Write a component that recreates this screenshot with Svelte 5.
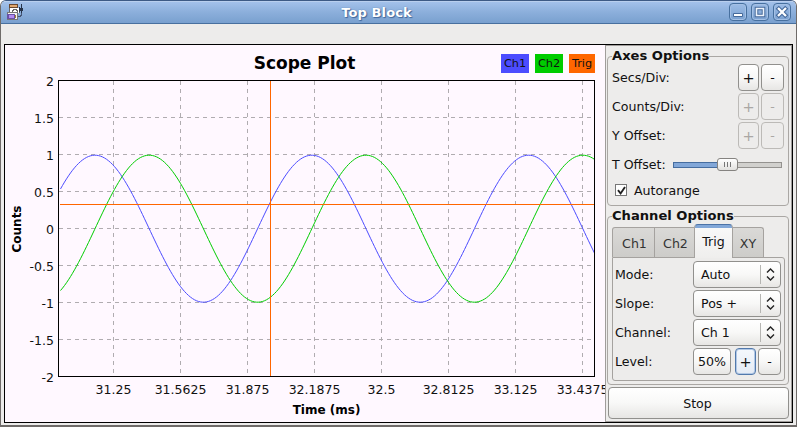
<script>
  const left = 59;
  const right = 594;
  const centerY = 228.7;
  const period = 216.8;

  const xTicks = ["31.25", "31.5625", "31.875", "32.1875", "32.5", "32.8125", "33.125", "33.4375"].map(
    (label, i) => ({ label, x: 113.5 + i * 67 })
  );
  const yTicks = ["2", "1.5", "1", "0.5", "0", "-0.5", "-1", "-1.5", "-2"].map((label, i) => ({
    label,
    y: 80.5 + i * 37,
  }));

  function wave(peakX) {
    const points = [];
    for (let x = left + 1.5; x <= right + 0.5; x += 2) {
      const y = centerY - 73.5 * Math.cos(((x - peakX) * 2 * Math.PI) / period);
      points.push(`${x},${y.toFixed(2)}`);
    }
    return points.join(" ");
  }

  const legend = [
    { label: "Ch1", x: 501, width: 28, color: "#4c4cff" },
    { label: "Ch2", x: 535, width: 28, color: "#00cc00" },
    { label: "Trig", x: 569, width: 26, color: "#ff6600" },
  ];

  const tabs = ["Ch1", "Ch2", "Trig", "XY"];
  let activeTab = $state("Trig");
  let autorange = $state(true);
  let tOffset = $state(50);

  const steppers = [
    { label: "Secs/Div:", disabled: false },
    { label: "Counts/Div:", disabled: true },
    { label: "Y Offset:", disabled: true },
  ];
  const choices = [
    { label: "Mode:", value: "Auto" },
    { label: "Slope:", value: "Pos +" },
    { label: "Channel:", value: "Ch 1" },
  ];
</script>

<div class="window">
  <header class="titlebar">
    <svg class="app-icon" width="17" height="17" viewBox="0 0 17 17" shape-rendering="crispEdges">
      <path d="M2 0h9v4H2z" fill="#6b4930" />
      <path d="M3 1h7v2H3z" fill="#e0a870" />
      <path d="M2 4h10v5H2z" fill="#fff" />
      <path d="M2 4v5M12 4v5" stroke="#666" />
      <path d="M5 8V6h1V5h3v1h1v2" fill="none" stroke="#666" />
      <path d="M12 3h1v5h-1zM14 0h1v9h-1zM13 4h3v3h-3z" fill="#263349" />
      <path d="M14.5 9v2h-1v1h-3" fill="none" stroke="#465675" />
      <path d="M0 8h11v8H0z" fill="#777" />
      <path d="M1 9h9v6H1z" fill="#f4f4f4" />
      <path d="M0 10h8v5H0z" fill="#6952a5" />
      <path d="M2 11h5v3H2z" fill="#b28af0" />
      <path d="M8 11h1v3H8z" fill="#9c7a2e" />
    </svg>
    <span class="title">Top Block</span>
    <div class="controls">
      <button type="button" aria-label="Minimize"><svg width="16" height="16" viewBox="0 0 16 16"><path d="M3.5 9.5h9v3h-9z" fill="#fff" stroke="#45699b" /></svg></button>
      <button type="button" aria-label="Maximize"><svg width="16" height="16" viewBox="0 0 16 16"><path d="M4.5 4.5h7v7h-7z" fill="none" stroke="#45699b" stroke-width="3.6" /><path d="M4.5 4.5h7v7h-7z" fill="none" stroke="#edf3fb" stroke-width="1.6" /></svg></button>
      <button type="button" aria-label="Close"><svg width="16" height="16" viewBox="0 0 16 16"><path d="M4.8 4.8l6.4 6.4m0-6.4l-6.4 6.4" stroke="#45699b" stroke-width="4.4" stroke-linecap="square" /><path d="M4.8 4.8l6.4 6.4m0-6.4l-6.4 6.4" stroke="#fff" stroke-width="2.3" stroke-linecap="square" /></svg></button>
    </div>
  </header>
  <div class="toolbar"></div>

  <main class="content">
    <svg class="plot" width="600" height="377" viewBox="5 45 600 377">
      <text class="plot-title" x="304.5" y="69" text-anchor="middle">Scope Plot</text>
      {#each legend as item}
        <rect x={item.x} y="54" width={item.width} height="19" fill={item.color} />
        <text class="key" x={item.x + item.width / 2} y="67" text-anchor="middle">{item.label}</text>
      {/each}

      <g class="grid">
        {#each xTicks as tick}
          <line x1={tick.x} x2={tick.x} y1="81" y2="376" />
        {/each}
        {#each yTicks.slice(1, -1) as tick}
          <line x1="59" x2="594" y1={tick.y} y2={tick.y} />
        {/each}
      </g>

      <polyline points={wave(95)} fill="none" stroke="#4c4cff" />
      <polyline points={wave(149.2)} fill="none" stroke="#00cc00" />
      <path d="M60 204.5H594M270.5 81V376" stroke="#ff6600" />
      <rect x="58.5" y="80.5" width="536" height="296" fill="none" stroke="#000" />

      {#each yTicks as tick}
        <text class="tick" x="54" y={tick.y + 5} text-anchor="end">{tick.label}</text>
      {/each}
      {#each xTicks as tick}
        <text class="tick" x={tick.x} y="394" text-anchor="middle">{tick.label}</text>
      {/each}
      <text class="axis" x="326.5" y="414" text-anchor="middle">Time (ms)</text>
      <text class="axis" transform="translate(21 229) rotate(-90)" text-anchor="middle">Counts</text>
    </svg>

    <aside class="panel">
      <fieldset class="axes">
        <legend>Axes Options</legend>
        {#each steppers as row}
          <div class="row">
            <span>{row.label}</span>
            <div class="pair">
              <button type="button" class="btn plus" disabled={row.disabled}>+</button>
              <button type="button" class="btn minus" disabled={row.disabled}>-</button>
            </div>
          </div>
        {/each}
        <div class="row">
          <span>T Offset:</span>
          <input class="slider" type="range" min="0" max="100" bind:value={tOffset} />
        </div>
        <label class="check">
          <input type="checkbox" bind:checked={autorange} />
          <span class="box">
            {#if autorange}
              <svg width="11" height="11" viewBox="0 0 11 11"><path d="M2 5.2l2.6 3.3L9 2" fill="none" stroke="#222" stroke-width="1.9" /></svg>
            {/if}
          </span>
          Autorange
        </label>
      </fieldset>

      <fieldset class="channels">
        <legend>Channel Options</legend>
        <div class="tabs">
          {#each tabs as tab}
            <button type="button" class="tab {tab.toLowerCase()}" class:active={activeTab === tab} onclick={() => (activeTab = tab)}>{tab}</button>
          {/each}
        </div>
        <div class="page">
          {#each choices as choice}
            <div class="row">
              <span>{choice.label}</span>
              <button type="button" class="btn choice">
                <span>{choice.value}</span>
                <svg width="20" height="19" viewBox="0 0 20 19"><path d="M.5 0v19" stroke="#b5b5b2" /><path d="M7 7.5l3.5-3.5 3.5 3.5M7 11.5l3.5 3.5 3.5-3.5" fill="none" stroke="#222" stroke-width="1.4" /></svg>
              </button>
            </div>
          {/each}
          <div class="row">
            <span>Level:</span>
            <div class="level">
              <button type="button" class="btn percent">50%</button>
              <div class="pair">
                <button type="button" class="btn plus hot">+</button>
                <button type="button" class="btn minus">-</button>
              </div>
            </div>
          </div>
        </div>
      </fieldset>

      <button type="button" class="btn stop">Stop</button>
    </aside>
  </main>
</div>

<style>
  :global(body) {
    background: #fff;
    overflow: hidden;
  }

  .window {
    box-sizing: border-box;
    width: 797px;
    height: 427px;
    display: flex;
    flex-direction: column;
    background: #edeceb;
    border: 1px solid #6f6b69;
    border-top-color: #3d5a85;
    border-bottom-width: 2px;
    border-radius: 6px 6px 0 0;
    overflow: hidden;
    font-family: "DejaVu Sans", sans-serif;
    font-size: 12.6px;
    color: #111;
  }

  .titlebar {
    box-sizing: border-box;
    height: 23px;
    flex: none;
    display: flex;
    align-items: center;
    padding: 0 5px 1px 6px;
    background: linear-gradient(#a3c1ea, #8db0dc 45%, #79a0cf);
    border-top: 1px solid #b9cfee;
    border-bottom: 1px solid #48709f;
  }

  .app-icon {
    width: 17px;
    flex: none;
  }

  .title {
    flex: 1;
    text-align: center;
    color: #fff;
    font-weight: bold;
    font-size: 13px;
    letter-spacing: 0.1px;
    text-shadow: 1px 1px 1px #3f669a, 0 0 1px #3f669a;
  }

  .controls {
    display: flex;
    gap: 4px;
  }

  .controls button {
    box-sizing: border-box;
    width: 18px;
    height: 18px;
    padding: 0;
    border: 1px solid #47709f;
    border-radius: 4px;
    background: linear-gradient(#9cbce6, #7ba1d0);
    box-shadow: inset 0 0 0 1px #a4c0e5;
  }

  .controls svg {
    display: block;
  }

  .toolbar {
    height: 20px;
    flex: none;
  }

  .content {
    box-sizing: border-box;
    width: 789px;
    height: 379px;
    flex: none;
    margin-left: 3px;
    display: flex;
    border: 1px solid #000;
    background: #fff8ff;
  }

  .plot {
    flex: none;
  }

  .plot text {
    fill: #111;
  }

  .plot .plot-title {
    font-size: 17px;
    font-weight: bold;
    fill: #000;
  }

  .plot .key {
    font-size: 11.3px;
  }

  .tick {
    font-size: 12.5px;
  }

  .plot .axis {
    font-size: 12px;
    font-weight: bold;
    fill: #000;
  }

  .grid line {
    stroke: #b0acb0;
    stroke-dasharray: 4 4;
  }

  .panel {
    box-sizing: border-box;
    width: 187px;
    background: #edeceb;
    border: 1px solid #a09d9b;
    padding: 2px 1px 1px;
  }

  fieldset {
    box-sizing: border-box;
    width: 182px;
    margin: 0;
    padding: 0 4px;
    min-width: 0;
    border: 1px solid #aaa7a4;
    border-radius: 4px;
  }

  legend {
    height: 16px;
    line-height: 16px;
    padding: 0;
    font-weight: bold;
    font-size: 13.1px;
    color: #111;
  }

  .axes {
    height: 158px;
    margin-bottom: 2px;
  }

  .channels {
    height: 177px;
    margin-bottom: 2px;
  }

  .row {
    height: 27px;
    margin-bottom: 2px;
    display: flex;
    align-items: center;
    justify-content: space-between;
  }

  .pair {
    display: flex;
    gap: 2px;
  }

  .btn {
    box-sizing: border-box;
    height: 27px;
    padding: 0;
    border: 1px solid #91908d;
    border-radius: 4px;
    background: linear-gradient(#fff, #f8f8f7 50%, #e7e6e4);
    font: inherit;
    color: #111;
  }

  .plus {
    width: 21px;
    font-size: 14.5px;
    line-height: 24px;
  }

  .minus {
    width: 23px;
  }

  .btn:disabled {
    border-color: #bcbab7;
    background: #edeceb;
    color: #aaa7a4;
  }

  .hot {
    border-color: #5279ac;
    background: linear-gradient(#f5f8fd, #e4ebf5);
    box-shadow: inset 0 0 0 1px #b2c8e5;
  }

  .slider {
    appearance: none;
    width: 109px;
    height: 14px;
    margin: 0 2px 0 0;
    background: linear-gradient(90deg, #82a7d8 50%, #d1d0cd 50%) center / 100% 6px no-repeat;
  }

  .slider::-webkit-slider-runnable-track {
    height: 6px;
    border: 1px solid #8b8a87;
    border-image: linear-gradient(90deg, #466d9f 50%, #94928f 50%) 1;
    box-sizing: border-box;
  }

  .slider::-webkit-slider-thumb {
    appearance: none;
    box-sizing: border-box;
    width: 21px;
    height: 13px;
    margin-top: -5px;
    border: 1px solid #858380;
    border-radius: 3px;
    background:
      linear-gradient(90deg, #777 1px, transparent 1px 3px, #777 3px 4px, transparent 4px 6px, #777 6px) center / 7px 5px no-repeat,
      linear-gradient(#fff, #e2e1df);
  }

  .check {
    height: 20px;
    display: flex;
    align-items: center;
    padding-left: 3px;
    margin-top: 1px;
  }

  .check input {
    display: none;
  }

  .box {
    box-sizing: border-box;
    width: 12px;
    height: 12px;
    margin-right: 7px;
    border: 1px solid #777;
    background: #fff;
  }

  .box svg {
    display: block;
    margin: -0.5px;
  }

  .tabs {
    height: 33px;
    display: flex;
    align-items: flex-end;
  }

  .tab {
    box-sizing: border-box;
    height: 30px;
    padding: 2px 0 0;
    border: 1px solid #a5a29f;
    border-left-width: 0;
    border-bottom: 0;
    border-radius: 0 3px 0 0;
    background: linear-gradient(#dad9d7, #cdccc9);
    font: inherit;
    color: #333;
  }

  .ch1 {
    width: 43px;
    padding-left: 2px;
    border-left-width: 1px;
    border-radius: 3px 0 0 0;
  }

  .ch2 {
    width: 39px;
    padding-left: 2px;
    border-right-width: 0;
    border-radius: 0;
  }

  .trig {
    width: 39px;
  }

  .xy {
    width: 31px;
  }

  .tab.active {
    height: 34px;
    margin-bottom: -1px;
    padding: 0 0 1px;
    border-left-width: 1px;
    border-radius: 4px 4px 0 0;
    border-top: 1px solid #4c73a7;
    background: linear-gradient(#82a7d8 3px, #f8f8f8 3px, #efeeed);
    color: #111;
  }

  .page {
    box-sizing: border-box;
    width: 173px;
    height: 124px;
    padding: 3px 3px 0 2px;
    border: 1px solid #a5a29f;
    border-radius: 0 3px 3px 3px;
  }

  .choice {
    width: 88px;
    display: flex;
    align-items: center;
    justify-content: space-between;
    padding: 0 0 0 7px;
  }

  .percent {
    width: 38px;
  }

  .level {
    display: flex;
    gap: 4px;
  }

  .stop {
    display: block;
    width: 181px;
    height: 32px;
    margin-left: 1px;
    padding-right: 2px;
  }
</style>
